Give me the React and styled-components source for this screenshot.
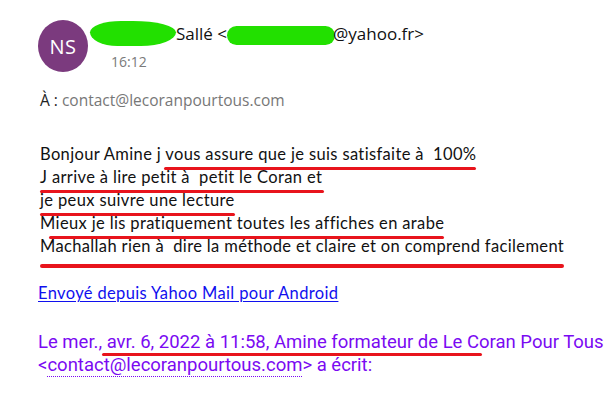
import React from "react";
import styled, { createGlobalStyle } from "styled-components";

const GlobalStyle = createGlobalStyle`
  html, body {
    margin: 0;
    padding: 0;
    background: #ffffff;
  }
  body {
    width: 608px;
    height: 396px;
    overflow: hidden;
  }
`;

const Page = styled.div`
  padding: 20px 0 0 38px;
  font-family: "Open Sans", "Noto Sans", sans-serif;
  color: #1b1b1b;
`;

const Header = styled.div`
  display: flex;
  align-items: flex-start;
  gap: 2px;
`;

const Avatar = styled.div`
  width: 50px;
  height: 52px;
  border-radius: 50%;
  background: #7b3a7e;
  color: #ffffff;
  display: flex;
  align-items: center;
  justify-content: center;
  font-size: 20px;
  letter-spacing: 0.5px;
  flex-shrink: 0;
`;

const Who = styled.div`
  display: flex;
  flex-direction: column;
  padding-top: 1px;
`;

const Name = styled.div`
  font-size: 17px;
  line-height: 24px;
  color: #111111;
  white-space: pre;
  display: flex;
  align-items: center;
`;

const Blob = styled.span`
  display: inline-block;
  width: ${(p) => p.w}px;
  height: ${(p) => p.h}px;
  background: #22e000;
  border-radius: ${(p) => p.r};
  margin: ${(p) => p.m};
`;

const Time = styled.div`
  font-size: 14px;
  color: #7a7a7a;
  margin: 7px 0 0 21px;
  line-height: 18px;
`;

const To = styled.div`
  margin: 18px 0 0 2px;
  font-size: 15.5px;
  line-height: 20px;
  color: #222222;

  span {
    color: #777777;
  }
`;

const Body = styled.div`
  margin: 33px 0 0 2px;
  font-family: Lato, "Open Sans", sans-serif;
  font-size: 16.5px;
  letter-spacing: 0.36px;
  color: #111111;
`;

const Line = styled.div`
  line-height: 23px;
  height: 23px;
  white-space: pre;
`;

const Mark = styled.span`
  position: relative;
  &::after {
    content: "";
    position: absolute;
    left: ${(p) => p.l || 0}px;
    right: ${(p) => p.r || 0}px;
    bottom: ${(p) => p.b || -2}px;
    height: ${(p) => p.t || 3}px;
    border-radius: 2px;
    background: #e8141c;
  }
`;

const Sent = styled.a`
  display: inline-block;
  margin-top: 24px;
  font-family: Lato, "Open Sans", sans-serif;
  font-size: 16.5px;
  letter-spacing: 0.36px;
  line-height: 22px;
  color: #1010ee;
  text-decoration: underline;
  text-underline-offset: 2px;
`;

const Quote = styled.div`
  margin-top: 27px;
  font-family: Roboto, sans-serif;
  font-size: 18.5px;
  line-height: 23px;
  color: #7a0af2;
  white-space: nowrap;
`;

const Mail = styled.span`
  border-bottom: 1px dotted #7a0af2;
`;

export default function App() {
  return (
    <>
      <GlobalStyle />
      <Page>
        <Header>
          <Avatar>NS</Avatar>
          <Who>
            <Name>
              <Blob w={86} h={25} r="40% 55% 45% 35% / 50% 50% 60% 60%" m="0" />
              {"Sallé <"}
              <Blob w={108} h={19} r="10px" m="3px -2px 0 0" />
              @yahoo.fr&gt;
            </Name>
            <Time>16:12</Time>
          </Who>
        </Header>

        <To>
          À : <span>contact@lecoranpourtous.com</span>
        </To>

        <Body>
          <Line>
            Bonjour Amine j <Mark l={-1} b={-6}>vous assure que je suis satisfaite à  100%</Mark>
          </Line>
          <Line>
            <Mark r={-2} b={-6}>J arrive à lire petit à  petit le Coran et</Mark>
          </Line>
          <Line>
            <Mark b={-6}>je peux suivre une lecture</Mark>
          </Line>
          <Line>
            <Mark l={9} b={-6}>Mieux je lis pratiquement toutes les affiches en arabe</Mark>
          </Line>
          <Line>
            <Mark t={4} b={-12}>Machallah rien à  dire la méthode et claire et on comprend facilement</Mark>
          </Line>
        </Body>

        <Sent href="#">Envoyé depuis Yahoo Mail pour Android</Sent>

        <Quote>
          <div>
            Le mer.,{" "}
            <Mark l={-5} r={-3} b={-3}>avr. 6, 2022 à 11:58, Amine formateur de Le C</Mark>oran Pour Tous
          </div>
          <div>
            &lt;<Mail>contact@lecoranpourtous.com</Mail>&gt; a écrit:
          </div>
        </Quote>
      </Page>
    </>
  );
}
